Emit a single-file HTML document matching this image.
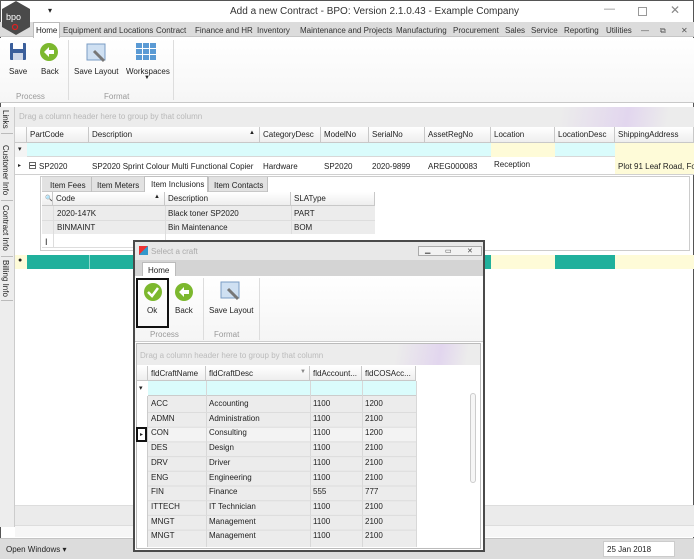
<!DOCTYPE html>
<html><head><style>
*{box-sizing:border-box;margin:0;padding:0}
body{width:694px;height:559px;overflow:hidden;font-family:"Liberation Sans",sans-serif;font-size:8px;color:#222;background:#fff;position:relative}
.a{position:absolute}
.t{position:absolute;white-space:nowrap}
.cell{position:absolute;border-right:1px solid #d8d8d8;border-bottom:1px solid #d8d8d8;padding-left:3px;white-space:nowrap;overflow:hidden}
.hd{background:linear-gradient(#fff,#eee);border-right:1px solid #c8c8c8;border-bottom:1px solid #c8c8c8}
.tb{position:absolute;top:26px;white-space:nowrap;font-size:8px;color:#333}
</style></head><body>
<div class="a" style="left:0;top:0;width:694px;height:559px;border:1px solid #555"></div>
<div class="t" style="left:230px;top:6px;font-size:10px;color:#333">Add a new Contract - BPO: Version 2.1.0.43 - Example Company</div>
<div class="t" style="left:48px;top:6px;font-size:8px">▾</div>
<div class="t" style="left:604px;top:3px;font-size:11px;color:#888">—</div>
<div class="a" style="left:638px;top:7px;width:9px;height:9px;border:1px solid #999"></div>
<div class="t" style="left:670px;top:3px;font-size:12px;color:#888">✕</div>
<div class="a" style="left:0;top:22px;width:694px;height:15px;background:#dcdcdc;border-bottom:1px solid #c6c6c6"></div>
<div class="a" style="left:33px;top:22px;width:27px;height:16px;background:#fff;border:1px solid #bbb;border-bottom:none"></div>
<div class="t" style="left:36px;top:26px;font-size:8px">Home</div>
<div class="tb" style="left:63px">Equipment and Locations</div>
<div class="tb" style="left:156px">Contract</div>
<div class="tb" style="left:195px">Finance and HR</div>
<div class="tb" style="left:257px">Inventory</div>
<div class="tb" style="left:300px">Maintenance and Projects</div>
<div class="tb" style="left:396px">Manufacturing</div>
<div class="tb" style="left:453px">Procurement</div>
<div class="tb" style="left:505px">Sales</div>
<div class="tb" style="left:531px">Service</div>
<div class="tb" style="left:564px">Reporting</div>
<div class="tb" style="left:606px">Utilities</div>
<div class="tb" style="left:641px;color:#555">—</div>
<div class="tb" style="left:660px;color:#555">⧉</div>
<div class="tb" style="left:681px;color:#555">✕</div>
<svg class="a" style="left:0;top:0" width="32" height="36"><polygon points="16,1 30,9 30,27 16,35 2,27 2,9" fill="#4a4a4a"/><text x="6" y="20" font-size="9" fill="#fff" font-family="Liberation Sans">bpo</text><circle cx="15" cy="27" r="2.5" fill="none" stroke="#d22" stroke-width="1.2"/></svg>
<div class="a" style="left:0;top:38px;width:694px;height:65px;background:linear-gradient(#fff,#f6f6f6);border-bottom:1px solid #c8c8c8"></div>
<div class="a" style="left:68px;top:40px;width:1px;height:60px;background:#ddd"></div>
<div class="a" style="left:173px;top:40px;width:1px;height:60px;background:#ddd"></div>
<svg class="a" style="left:9px;top:42px" width="18" height="20"><rect x="1" y="1" width="16" height="17" rx="1" fill="#3b5f9b"/><rect x="4" y="1" width="10" height="6" fill="#fff"/><rect x="4" y="11" width="10" height="7" fill="#d0d8e8"/></svg>
<svg class="a" style="left:39px;top:42px" width="20" height="20"><circle cx="10" cy="10" r="9" fill="#7cb82e"/><path d="M5 10 L10 5 L10 8 L15 8 L15 12 L10 12 L10 15 Z" fill="#fff"/></svg>
<div class="t" style="left:9px;top:67px">Save</div>
<div class="t" style="left:41px;top:67px">Back</div>
<div class="t" style="left:16px;top:92px;color:#999">Process</div>
<svg class="a" style="left:86px;top:42px" width="22" height="22"><rect x="1" y="2" width="18" height="16" fill="#cfe0f2" stroke="#7a9cc4"/><path d="M8 9 L18 19" stroke="#777" stroke-width="3"/></svg>
<svg class="a" style="left:136px;top:42px" width="22" height="22"><g fill="#5a9ad4"><rect x="0" y="1" width="6" height="5"/><rect x="7" y="1" width="6" height="5"/><rect x="14" y="1" width="6" height="5"/><rect x="0" y="7" width="6" height="5"/><rect x="7" y="7" width="6" height="5"/><rect x="14" y="7" width="6" height="5"/><rect x="0" y="13" width="6" height="5"/><rect x="7" y="13" width="6" height="5"/><rect x="14" y="13" width="6" height="5"/></g></svg>
<div class="t" style="left:74px;top:67px">Save Layout</div>
<div class="t" style="left:126px;top:67px">Workspaces</div>
<div class="t" style="left:144px;top:75px;font-size:6px">▼</div>
<div class="t" style="left:104px;top:92px;color:#999">Format</div>
<div class="a" style="left:0;top:107px;width:15px;height:420px;background:#ededed;border-right:1px solid #ccc"></div>
<div class="t" style="left:1px;top:110px;font-size:8px;writing-mode:vertical-rl">Links</div>
<div class="t" style="left:1px;top:145px;font-size:8px;writing-mode:vertical-rl">Customer Info</div>
<div class="t" style="left:1px;top:205px;font-size:8px;writing-mode:vertical-rl">Contract Info</div>
<div class="t" style="left:1px;top:260px;font-size:8px;writing-mode:vertical-rl">Billing Info</div>
<div class="a" style="left:1px;top:133px;width:12px;height:1px;background:#bbb"></div>
<div class="a" style="left:1px;top:200px;width:12px;height:1px;background:#bbb"></div>
<div class="a" style="left:1px;top:256px;width:12px;height:1px;background:#bbb"></div>
<div class="a" style="left:1px;top:300px;width:12px;height:1px;background:#bbb"></div>
<div class="a" style="left:15px;top:107px;width:679px;height:20px;background:linear-gradient(100deg,#ececec 80%,#e2d6ee 90%,#ececec 96%)"></div>
<div class="t" style="left:19px;top:112px;color:#b8b8b8">Drag a column header here to group by that column</div>
<div class="cell hd" style="left:15px;top:127px;width:12px;height:16px"></div>
<div class="cell hd" style="left:27px;top:127px;width:62px;height:16px;padding-top:3px">PartCode</div>
<div class="cell hd" style="left:89px;top:127px;width:171px;height:16px;padding-top:3px">Description<span style="position:absolute;right:4px;font-size:6px">▲</span></div>
<div class="cell hd" style="left:260px;top:127px;width:61px;height:16px;padding-top:3px">CategoryDesc</div>
<div class="cell hd" style="left:321px;top:127px;width:48px;height:16px;padding-top:3px">ModelNo</div>
<div class="cell hd" style="left:369px;top:127px;width:56px;height:16px;padding-top:3px">SerialNo</div>
<div class="cell hd" style="left:425px;top:127px;width:66px;height:16px;padding-top:3px">AssetRegNo</div>
<div class="cell hd" style="left:491px;top:127px;width:64px;height:16px;padding-top:3px">Location</div>
<div class="cell hd" style="left:555px;top:127px;width:60px;height:16px;padding-top:3px">LocationDesc</div>
<div class="cell hd" style="left:615px;top:127px;width:79px;height:16px;padding-top:3px">ShippingAddress</div>
<div class="a" style="left:15px;top:143px;width:679px;height:14px;background:#dafcfc;border-bottom:1px solid #d8d8d8"></div>
<div class="a" style="left:491px;top:143px;width:64px;height:14px;background:#fefbd8"></div>
<div class="a" style="left:615px;top:143px;width:79px;height:14px;background:#fefbd8"></div>
<div class="a" style="left:15px;top:143px;width:12px;height:14px;background:#f4f4f4"></div>
<div class="t" style="left:18px;top:145px;font-size:7px">▾</div>
<div class="a" style="left:15px;top:157px;width:679px;height:18px;border-bottom:1px solid #d0d0d0"></div>
<div class="t" style="left:18px;top:162px;font-size:6px">▸</div>
<div class="a" style="left:29px;top:162px;width:7px;height:7px;border:1px solid #666"></div>
<div class="a" style="left:30px;top:165px;width:5px;height:1px;background:#444"></div>
<div class="t" style="left:39px;top:162px">SP2020</div>
<div class="t" style="left:92px;top:162px">SP2020 Sprint Colour Multi Functional Copier</div>
<div class="t" style="left:263px;top:162px">Hardware</div>
<div class="t" style="left:324px;top:162px">SP2020</div>
<div class="t" style="left:372px;top:162px">2020-9899</div>
<div class="t" style="left:428px;top:162px">AREG000083</div>
<div class="t" style="left:494px;top:160px">Reception</div>
<div class="a" style="left:615px;top:157px;width:79px;height:17px;background:#fefbd8"></div>
<div class="t" style="left:618px;top:162px">Plot 91 Leaf Road, Fo</div>
<div class="a" style="left:40px;top:176px;width:650px;height:75px;border:1px solid #ccc"></div>
<div class="a" style="left:42px;top:177px;width:226px;height:15px;background:#e2e2e2;border-bottom:1px solid #c8c8c8"></div>
<div class="a" style="left:91px;top:177px;width:1px;height:15px;background:#c0c0c0"></div>
<div class="a" style="left:144px;top:176px;width:64px;height:17px;background:#fff;border:1px solid #c0c0c0;border-bottom:none"></div>
<div class="a" style="left:208px;top:177px;width:1px;height:15px;background:#c0c0c0"></div>
<div class="a" style="left:267px;top:177px;width:1px;height:15px;background:#c0c0c0"></div>
<div class="t" style="left:50px;top:181px">Item Fees</div>
<div class="t" style="left:97px;top:181px">Item Meters</div>
<div class="t" style="left:151px;top:180px">Item Inclusions</div>
<div class="t" style="left:214px;top:181px">Item Contacts</div>
<div class="cell hd" style="left:42px;top:192px;width:11px;height:14px;font-size:6px;padding-top:3px">🔍</div>
<div class="cell hd" style="left:53px;top:192px;width:112px;height:14px;padding-top:2px">Code<span style="position:absolute;right:4px;font-size:6px">▲</span></div>
<div class="cell hd" style="left:165px;top:192px;width:126px;height:14px;padding-top:2px">Description</div>
<div class="cell hd" style="left:291px;top:192px;width:84px;height:14px;padding-top:2px">SLAType</div>
<div class="a" style="left:42px;top:206px;width:333px;height:28px;background:#ececec"></div>
<div class="a" style="left:42px;top:220px;width:333px;height:1px;background:#ddd"></div>
<div class="a" style="left:53px;top:206px;width:1px;height:42px;background:#ddd"></div>
<div class="a" style="left:165px;top:206px;width:1px;height:42px;background:#ddd"></div>
<div class="a" style="left:291px;top:206px;width:1px;height:28px;background:#ddd"></div>
<div class="t" style="left:57px;top:209px">2020-147K</div>
<div class="t" style="left:168px;top:209px">Black toner SP2020</div>
<div class="t" style="left:294px;top:209px">PART</div>
<div class="t" style="left:57px;top:223px">BINMAINT</div>
<div class="t" style="left:168px;top:223px">Bin Maintenance</div>
<div class="t" style="left:294px;top:223px">BOM</div>
<div class="a" style="left:42px;top:234px;width:333px;height:14px;border-bottom:1px solid #ddd"></div>
<div class="t" style="left:45px;top:237px;font-size:9px">I</div>
<div class="a" style="left:15px;top:255px;width:679px;height:14px;background:#fefbd8"></div>
<div class="a" style="left:27px;top:255px;width:464px;height:14px;background:#20b09c"></div>
<div class="a" style="left:555px;top:255px;width:60px;height:14px;background:#20b09c"></div>
<div class="a" style="left:89px;top:255px;width:1px;height:14px;background:#8fd8cc"></div>
<div class="t" style="left:18px;top:257px;font-size:7px">●</div>
<div class="a" style="left:15px;top:505px;width:679px;height:20px;background:#ebebeb;border-top:1px solid #ddd"></div>
<div class="a" style="left:15px;top:525px;width:679px;height:12px;background:#f6f6f6;border-top:1px solid #ddd"></div>
<div class="a" style="left:0;top:538px;width:694px;height:21px;background:#dcdcdc;border-top:1px solid #c4c4c4"></div>
<div class="t" style="left:6px;top:545px">Open Windows ▾</div>
<div class="a" style="left:603px;top:541px;width:72px;height:16px;background:#fff;border:1px solid #ccc"></div>
<div class="t" style="left:607px;top:545px">25 Jan 2018</div>
<!-- dialog -->
<div class="a" style="left:133px;top:240px;width:352px;height:312px;background:#fff;border:2px solid #4a4a4a"></div>
<div class="a" style="left:135px;top:242px;width:348px;height:18px;background:#e8e8e8"></div>
<div class="a" style="left:139px;top:246px;width:9px;height:9px;background:linear-gradient(135deg,#e33 50%,#39c 50%)"></div>
<div class="t" style="left:151px;top:247px;color:#aaa">Select a craft</div>
<div class="a" style="left:418px;top:246px;width:64px;height:10px;border:1px solid #aaa;background:#f2f2f2;font-size:7px;color:#444"><span style="position:absolute;left:6px;top:-1px">▁</span><span style="position:absolute;left:26px;top:0">▭</span><span style="position:absolute;left:48px;top:0">✕</span></div>
<div class="a" style="left:135px;top:260px;width:348px;height:16px;background:#d4d4d4"></div>
<div class="a" style="left:142px;top:262px;width:34px;height:15px;background:#fff;border:1px solid #bbb;border-bottom:none"></div>
<div class="t" style="left:148px;top:266px">Home</div>
<div class="a" style="left:135px;top:276px;width:348px;height:66px;background:linear-gradient(#fff,#f5f5f5);border-bottom:1px solid #ccc"></div>
<div class="a" style="left:136px;top:278px;width:33px;height:50px;border:2px solid #111"></div>
<svg class="a" style="left:143px;top:282px" width="20" height="20"><circle cx="10" cy="10" r="9" fill="#7cb82e"/><path d="M5 10 L9 14 L15 6" stroke="#fff" stroke-width="2.5" fill="none"/></svg>
<svg class="a" style="left:174px;top:282px" width="20" height="20"><circle cx="10" cy="10" r="9" fill="#7cb82e"/><path d="M5 10 L10 5 L10 8 L15 8 L15 12 L10 12 L10 15 Z" fill="#fff"/></svg>
<div class="t" style="left:147px;top:306px">Ok</div>
<div class="t" style="left:175px;top:306px">Back</div>
<div class="t" style="left:150px;top:330px;color:#999">Process</div>
<div class="a" style="left:203px;top:278px;width:1px;height:62px;background:#ddd"></div>
<div class="a" style="left:259px;top:278px;width:1px;height:62px;background:#ddd"></div>
<svg class="a" style="left:220px;top:280px" width="22" height="22"><rect x="1" y="2" width="18" height="16" fill="#cfe0f2" stroke="#7a9cc4"/><path d="M8 9 L18 19" stroke="#777" stroke-width="3"/></svg>
<div class="t" style="left:209px;top:306px">Save Layout</div>
<div class="t" style="left:214px;top:330px;color:#999">Format</div>
<div class="a" style="left:136px;top:343px;width:345px;height:206px;border:1px solid #bbb;background:#fff"></div>
<div class="a" style="left:137px;top:344px;width:343px;height:21px;background:linear-gradient(100deg,#ececec 75%,#e2d6ee 88%,#ececec 96%)"></div>
<div class="t" style="left:140px;top:351px;color:#bbb">Drag a column header here to group by that column</div>
<div class="cell hd" style="left:137px;top:366px;width:11px;height:15px"></div>
<div class="cell hd" style="left:148px;top:366px;width:58px;height:15px;padding-top:3px">fldCraftName</div>
<div class="cell hd" style="left:206px;top:366px;width:104px;height:15px;padding-top:3px">fldCraftDesc<span style="position:absolute;right:3px;font-size:6px;color:#888">▼</span></div>
<div class="cell hd" style="left:310px;top:366px;width:52px;height:15px;padding-top:3px">fldAccount...</div>
<div class="cell hd" style="left:362px;top:366px;width:54px;height:15px;padding-top:3px">fldCOSAcc...</div>
<div class="a" style="left:148px;top:381px;width:268px;height:15px;background:#dafcfc;border-bottom:1px solid #ccc"></div>
<div class="t" style="left:139px;top:384px;font-size:7px">▾</div>
<div class="a" style="left:148px;top:396px;width:268px;height:151px;background:#ececec"></div>
<div class="a" style="left:148px;top:427px;width:268px;height:15px;background:#f3f3f3"></div>
<div class="a" style="left:137px;top:396px;width:11px;height:151px;background:#fff;border-right:1px solid #ccc"></div>
<div class="a" style="left:136px;top:427px;width:11px;height:15px;border:2px solid #111"></div>
<div class="t" style="left:140px;top:431px;font-size:6px">▸</div>
<div class="a" style="left:206px;top:381px;width:1px;height:166px;background:#d8d8d8"></div>
<div class="a" style="left:310px;top:381px;width:1px;height:166px;background:#d8d8d8"></div>
<div class="a" style="left:362px;top:381px;width:1px;height:166px;background:#d8d8d8"></div>
<div class="a" style="left:416px;top:381px;width:1px;height:166px;background:#d8d8d8"></div>
<div class="a" style="left:470px;top:393px;width:6px;height:90px;border:1px solid #ccc;border-radius:3px;background:#f6f6f6"></div>
<div class="t" style="left:151px;top:397px;line-height:14.7px">ACC<br>ADMN<br>CON<br>DES<br>DRV<br>ENG<br>FIN<br>ITTECH<br>MNGT<br>MNGT</div>
<div class="t" style="left:209px;top:397px;line-height:14.7px">Accounting<br>Administration<br>Consulting<br>Design<br>Driver<br>Engineering<br>Finance<br>IT Technician<br>Management<br>Management</div>
<div class="t" style="left:313px;top:397px;line-height:14.7px">1100<br>1100<br>1100<br>1100<br>1100<br>1100<br>555<br>1100<br>1100<br>1100</div>
<div class="t" style="left:365px;top:397px;line-height:14.7px">1200<br>2100<br>1200<br>2100<br>2100<br>2100<br>777<br>2100<br>2100<br>2100</div>
<div class="a" style="left:148px;top:412px;width:268px;height:1px;background:#dcdcdc;box-shadow:0 14.7px #dcdcdc,0 29.4px #dcdcdc,0 44.1px #dcdcdc,0 58.8px #dcdcdc,0 73.5px #dcdcdc,0 88.2px #dcdcdc,0 102.9px #dcdcdc,0 117.6px #dcdcdc"></div>
</body></html>
